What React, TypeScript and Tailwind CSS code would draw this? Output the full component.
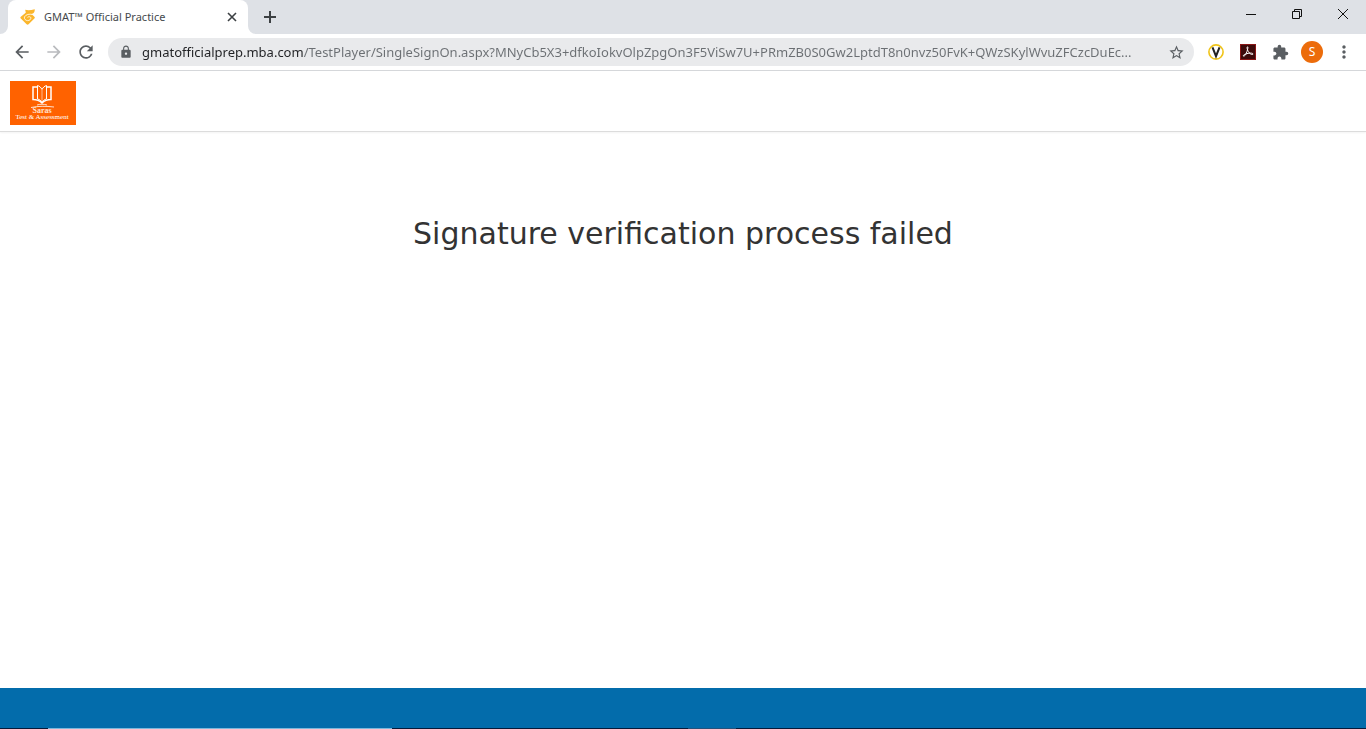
import { useState } from 'react';
import { MdArrowBack, MdArrowForward, MdExtension, MdLock, MdMoreVert, MdRefresh, MdStarBorder } from 'react-icons/md';

const pageUrl =
  'gmatofficialprep.mba.com/TestPlayer/SingleSignOn.aspx?MNyCb5X3+dfkoIokvOlpZpgOn3F5ViSw7U+PRmZB0S0Gw2LptdT8n0nvz50FvK+QWzSKylWvuZFCzcDuEc...';

const GmatIcon = () => (
  <svg viewBox="0 0 16 16" className="w-4 h-4" aria-hidden="true">
    <path d="M6 3.500.8 7.800c-.6.600-.6 1.200 0 1.800l5.800 5.600c.6.600 1.400.6 2 0l5.800-5.600c.6-.6.6-1.200 0-1.800L10.500 4z" fill="#fbb62c" />
    <path d="M5.200.8c2.500.8 5.500.6 9.600-.5 0 2.400-.8 4-2.600 4.400-2.400.5-4.800 0-6.400-1z" fill="#fbb62c" />
    <path d="M12.500 5.600C9.500 4.600 5.800 5.400 4.400 8c-.4 1.900 1.200 3.600 3.200 3.600 1.900 0 3.500-1.200 3.300-2.800-.3-1.200-2.300-1.500-3.400-.4" fill="none" stroke="#fff" strokeWidth="0.800" />
  </svg>
);

const PdfIcon = () => (
  <svg viewBox="0 0 16 16" className="w-4 h-4" aria-hidden="true">
    <rect width="16" height="16" fill="#8a1616" />
    <rect x="1" y="1" width="14" height="14" fill="#3d0b0b" />
    <path d="M7.600 2.800c-1.100.1-.3 3 .8 4.800 1.100 1.900 3 3.200 4.200 2.900 1.100-.4.200-1.500-2.300-1.400-2.900.1-6.400 1.300-7 2.400-.4.900 1 1.200 2.300-.9C6.900 8.500 8.600 2.700 7.600 2.800z" fill="none" stroke="#fff" strokeWidth="1" />
  </svg>
);

const VIcon = () => (
  <svg viewBox="0 0 16 16" className="w-4 h-4" aria-hidden="true">
    <circle cx="8" cy="8" r="7.100" fill="#fff" stroke="#f0c419" strokeWidth="1.600" />
    <path d="M4.500 3.300 8 12.200l3.500-8.900" fill="none" stroke="#222" strokeWidth="2" />
  </svg>
);

const SarasLogo = () => (
  <a href="#home" aria-label="Saras Test & Assessment" className="block w-[66px] h-11 bg-[#ff6200]">
    <svg viewBox="0 0 66 44" className="w-full h-full">
      <g fill="none" stroke="#fff">
        <path d="M32 8.500c-1-2-2.500-3.500-4.500-4v13.500c2 .5 3.500 1.500 4.500 3.500 1-2 2.500-3 4.500-3.500V4.500c-2 .5-3.500 2-4.500 4z" strokeWidth="1" />
        <path d="M32 9v12" strokeWidth="0.800" opacity="0.700" />
        <path d="M27 6h-4v12.500c3.500 0 6.500 1 9 3.500 2.500-2.500 5.500-3.500 9-3.500V6h-4" strokeWidth="1.500" />
        <path d="M27 24c3-1 7-1 10 0M21 26.500c7-1.500 15-1.500 23-.5" opacity="0.800" />
      </g>
      <text x="32" y="32" textAnchor="middle" fill="#ffe3d0" fontSize="8" fontWeight="bold" fontFamily="Liberation Serif, serif">Saras</text>
      <text x="32" y="38" textAnchor="middle" fill="#fff" fontSize="7" fontFamily="Liberation Serif, serif">Test & Assessment</text>
    </svg>
  </a>
);

const TabStrip = () => (
  <div className="flex h-[34px] bg-[#dee1e6] pl-2">
    <div className="relative flex items-center w-60 h-full pl-3 pr-2 bg-white rounded-t-lg">
      <svg viewBox="0 0 8 8" className="absolute -left-2 bottom-0 w-2 h-2 fill-white" aria-hidden="true">
        <path d="M8 0v8H0a8 8 0 0 0 8-8z" />
      </svg>
      <svg viewBox="0 0 8 8" className="absolute -right-2 bottom-0 w-2 h-2 fill-white" aria-hidden="true">
        <path d="M0 0v8h8a8 8 0 0 1-8-8z" />
      </svg>
      <GmatIcon />
      <span className="flex-1 ml-2 text-[11px] leading-4 text-[#45494d] whitespace-nowrap">GMAT™ Official Practice</span>
      <button aria-label="Close tab" className="flex items-center justify-center w-4 h-4">
        <svg viewBox="0 0 16 16" className="w-4 h-4" stroke="#3c4043" strokeWidth="1.600">
          <path d="m4 4 8 8m0-8-8 8" />
        </svg>
      </button>
    </div>
    <button aria-label="New tab" className="flex items-center justify-center w-7 ml-2">
      <svg viewBox="0 0 12 12" className="w-3 h-3" stroke="#3c4043" strokeWidth="2">
        <path d="M6 0v12M0 6h12" />
      </svg>
    </button>
    <div className="flex h-7 ml-auto">
      <button aria-label="Minimize" className="flex items-center justify-center w-[46px]">
        <svg viewBox="0 0 10 10" className="w-2.5 h-2.5" stroke="#111">
          <path d="M0 5.500h10" />
        </svg>
      </button>
      <button aria-label="Restore" className="flex items-center justify-center w-[46px]">
        <svg viewBox="0 0 10 10" className="w-2.5 h-2.5" fill="none" stroke="#111">
          <path d="M.5 2.500h7v7h-7zM2.500 2.500v-2h7v7h-2" />
        </svg>
      </button>
      <button aria-label="Close" className="flex items-center justify-center w-[46px]">
        <svg viewBox="0 0 10 10" className="w-2.5 h-2.5" stroke="#111">
          <path d="m0 0 10 10M10 0 0 10" />
        </svg>
      </button>
    </div>
  </div>
);

const Toolbar = () => {
  const [url, setUrl] = useState(pageUrl);
  const button = 'flex items-center justify-center w-8 h-8 shrink-0';

  return (
    <div className="flex items-center h-[37px] px-1.5 bg-white border-b border-[#d5d7da] text-[#5a5e62]">
      <button aria-label="Back" className={button}><MdArrowBack size={20} /></button>
      <button aria-label="Forward" className={`${button} text-[#b9bbbe]`}><MdArrowForward size={20} /></button>
      <button aria-label="Reload" className={button}><MdRefresh size={20} /></button>
      <div className="flex items-center flex-1 min-w-0 h-7 mx-1.5 pl-2.5 pr-0.5 bg-[#e9eaec] rounded-full">
        <MdLock size={14} className="mx-px shrink-0" />
        {/* the host part of the address is darker than the path */}
        <input
          aria-label="Address"
          value={url}
          onChange={(e) => setUrl(e.target.value)}
          spellCheck={false}
          className="flex-1 min-w-0 h-7 ml-2 text-[13px] outline-none text-transparent caret-black bg-clip-text bg-[linear-gradient(90deg,#202124_162px,#6b6f73_162px)]"
        />
        <button aria-label="Bookmark this page" className={button}><MdStarBorder size={17} /></button>
      </div>
      <button aria-label="V extension" className={button}><VIcon /></button>
      <button aria-label="Adobe Acrobat" className={button}><PdfIcon /></button>
      <button aria-label="Extensions" className={button}><MdExtension size={17} /></button>
      <button aria-label="Profile" className={button}>
        <span className="flex items-center justify-center w-[22px] h-[22px] rounded-full bg-[#ec6c0b] text-white text-xs">S</span>
      </button>
      <button aria-label="Menu" className={button}><MdMoreVert size={20} /></button>
    </div>
  );
};

const App = () => {
  return (
    <div className="flex flex-col min-h-screen bg-white font-['Noto_Sans',sans-serif]">
      <TabStrip />
      <Toolbar />
      <header className="h-[61px] px-2.5 pt-2.5 border-b border-[#dcdcdc] shadow-xs">
        <SarasLogo />
      </header>
      <main className="flex-1 px-4 pt-20">
        <h1 className="text-center text-[30px] leading-[44px] text-[#333333] font-['DejaVu_Sans',sans-serif]">
          Signature verification process failed
        </h1>
      </main>
      <footer className="h-10 bg-[#036cab]"></footer>
      <div className="flex h-px bg-[#061a3a]">
        <div className="w-[344px] ml-12 bg-[#7db8dc]"></div>
        <div className="w-12 ml-[296px] bg-[#24527c]"></div>
      </div>
    </div>
  );
};

export default App;
